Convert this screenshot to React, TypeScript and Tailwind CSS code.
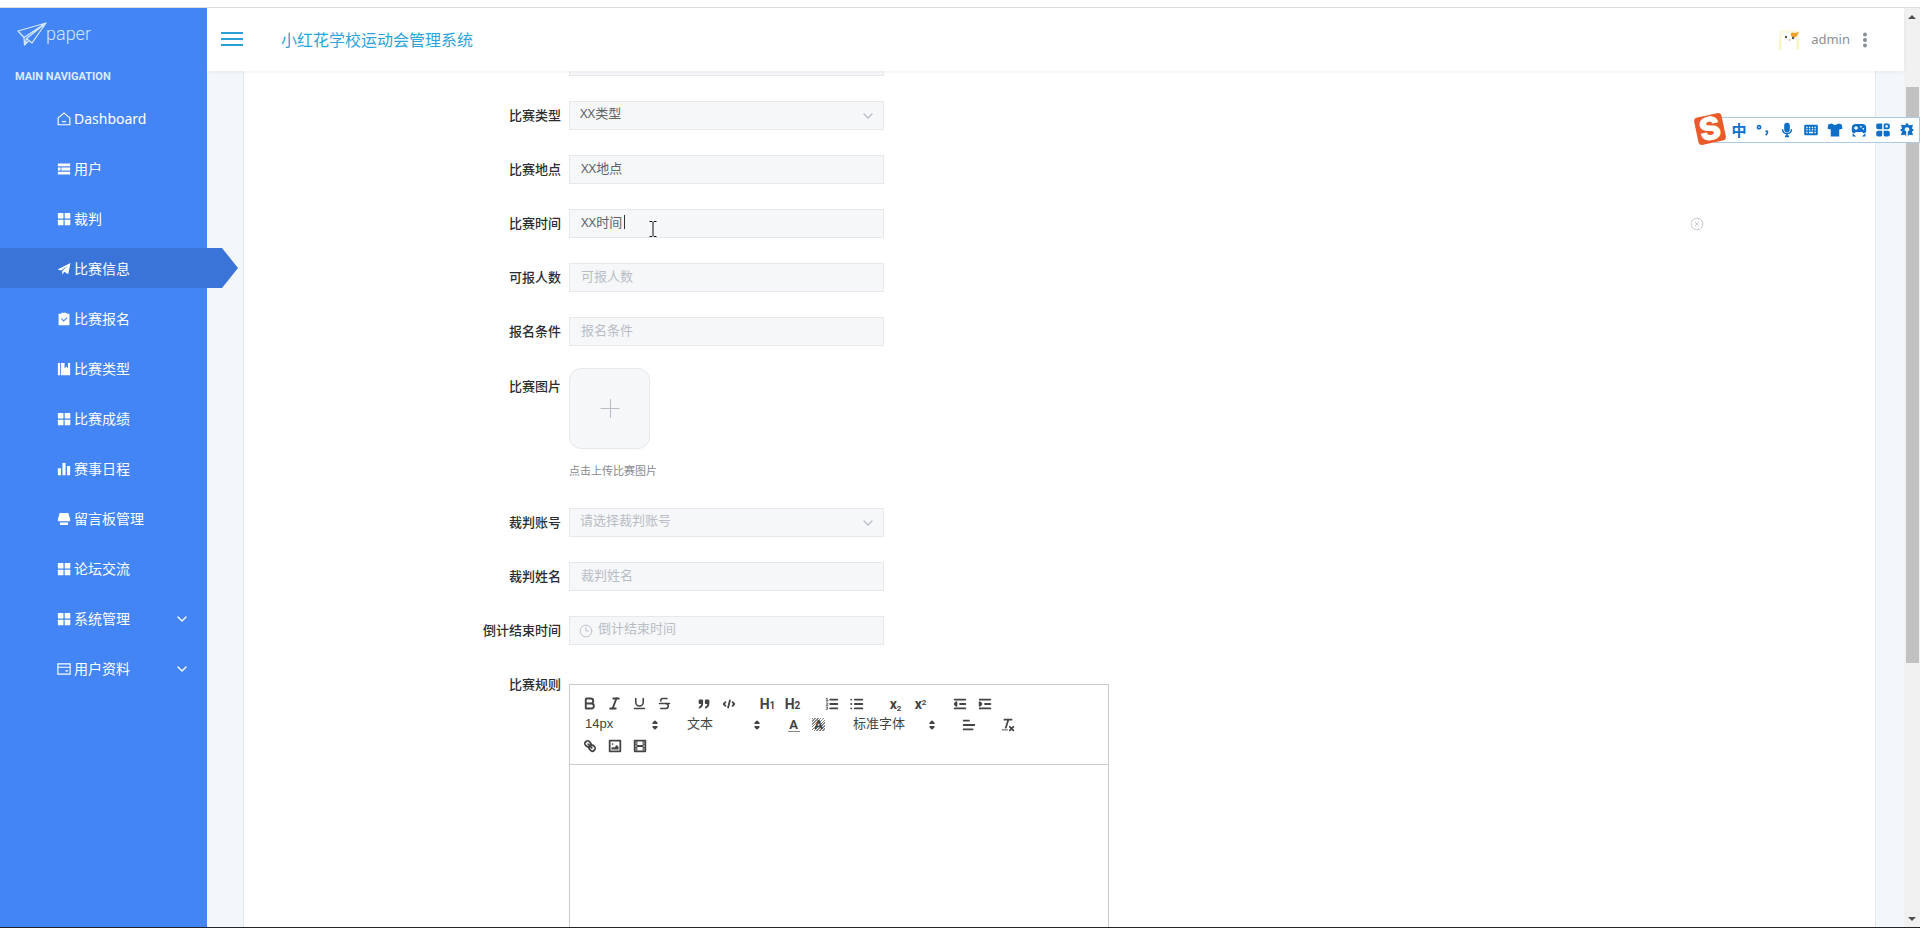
import type { ReactNode } from "react";
import {
  Bold,
  ChevronDown,
  CircleX,
  Clock3,
  Italic,
  Strikethrough,
  Underline,
} from "lucide-react";

type IconProps = { children: ReactNode };

// 16x16 solid glyphs used by the side menu
function MenuIcon({ children }: IconProps) {
  return (
    <svg viewBox="0 0 16 16" className="size-3.5 shrink-0" fill="currentColor">
      {children}
    </svg>
  );
}

// 18x18 line glyphs used by the editor toolbar
function EditorIcon({ children }: IconProps) {
  return (
    <svg
      viewBox="0 0 18 18"
      className="size-4"
      fill="none"
      stroke="currentColor"
      strokeWidth="2"
      strokeLinecap="round"
      strokeLinejoin="round">
      {children}
    </svg>
  );
}

const gridIcon = (
  <MenuIcon>
    <rect x="1" y="1" width="6.4" height="6.4" rx="0.6" />
    <rect x="8.8" y="1" width="6.4" height="6.4" rx="0.6" />
    <rect x="1" y="8.8" width="6.4" height="6.4" rx="0.6" />
    <rect x="8.8" y="8.8" width="6.4" height="6.4" rx="0.6" />
  </MenuIcon>
);

const menu = [
  {
    label: "Dashboard",
    icon: (
      <MenuIcon>
        <path
          d="M3.500 5 8 1.200 12.500 5l2.200 1.500V14.600H1.300V6.500ZM6 10.600q2 1.400 4 0"
          fill="none"
          stroke="currentColor"
          strokeWidth="1.3"
        />
      </MenuIcon>
    ),
  },
  {
    label: "用户",
    icon: (
      <MenuIcon>
        <path d="M1 1.600h14v3.200H1ZM1 6.400h3v3.200H1ZM5 6.400h10v3.200H5ZM1 11.200h14v3.200H1Z" />
      </MenuIcon>
    ),
  },
  { label: "裁判", icon: gridIcon },
  {
    label: "比赛信息",
    active: true,
    icon: (
      <MenuIcon>
        <path d="M.6 8.600 15.400 1 12.800 14 8.400 11.200 6 14.600V10.400L12.400 4.400 4.600 9.800Z" />
      </MenuIcon>
    ),
  },
  {
    label: "比赛报名",
    icon: (
      <MenuIcon>
        <path
          fillRule="evenodd"
          d="M1.800 2H5V.8h6V2h3.200v13.200H1.800ZM4.600 8l2.900 3.200 4.500-4.400-.9-.9-3.500 3.500-2-2.300Z"
        />
      </MenuIcon>
    ),
  },
  {
    label: "比赛类型",
    icon: (
      <MenuIcon>
        <path d="M1 1h2.600v14H1ZM4.600 1h4v6l2-1.600 2 1.600V1H15v14H4.600Z" />
      </MenuIcon>
    ),
  },
  { label: "比赛成绩", icon: gridIcon },
  {
    label: "赛事日程",
    icon: (
      <MenuIcon>
        <path d="M1 7h3.600v8H1ZM6.200 1h3.600v14H6.200ZM11.400 4.600H15V15h-3.600Z" />
      </MenuIcon>
    ),
  },
  {
    label: "留言板管理",
    icon: (
      <MenuIcon>
        <path d="M3 1h10l2 7.400v2.200H1V8.400ZM3.400 12h9.200v2.800H3.400Z" />
      </MenuIcon>
    ),
  },
  { label: "论坛交流", icon: gridIcon },
  { label: "系统管理", icon: gridIcon, nested: true },
  {
    label: "用户资料",
    nested: true,
    icon: (
      <MenuIcon>
        <path
          d="M1 2.200h14v11.600H1ZM1 6h14M9.500 10.200h3.200"
          fill="none"
          stroke="currentColor"
          strokeWidth="1.3"
        />
      </MenuIcon>
    ),
  },
];

function Sidebar() {
  return (
    <aside className="z-20 flex w-[207px] shrink-0 flex-col bg-[#4385f5] text-white">
      <a href="#" className="flex h-10 items-end pl-4 text-[#d3e8ff]">
        <svg
          viewBox="0 0 32 26"
          className="h-[26px] w-8"
          fill="none"
          stroke="currentColor"
          strokeWidth="1.3"
          strokeLinejoin="round">
          <path d="M2 9 30 1 16 21 10.500 16.500 8.500 23 8 15.500ZM8 15.500 30 1 10.500 16.500M8.500 23l4-4" />
        </svg>
        <span className="-ml-0.5 font-[Roboto] text-lg leading-7 font-light">
          paper
        </span>
      </a>
      <p className="mt-[21px] pl-[15px] font-[Roboto] text-[11px] leading-4 font-bold text-[#dcebff]">
        MAIN NAVIGATION
      </p>
      <nav className="mt-[13px] flex flex-col gap-2.5">
        {menu.map((item) => (
          <a
            key={item.label}
            href="#"
            aria-current={item.active ? "page" : undefined}
            className={
              item.active
                ? "flex h-10 w-[238px] items-center gap-[3px] bg-[#3b74d9] pt-0.5 pl-[57px] text-sm [clip-path:polygon(0_0,222px_0,100%_50%,222px_100%,0_100%)]"
                : "flex h-10 items-center gap-[3px] pt-0.5 pr-[17px] pl-[57px] text-sm"
            }>
            {item.icon}
            <span>{item.label}</span>
            {item.nested ? (
              <ChevronDown className="ml-auto size-4" strokeWidth={2} />
            ) : null}
          </a>
        ))}
      </nav>
    </aside>
  );
}

function Avatar() {
  return (
    <svg viewBox="0 0 20 20" className="size-5">
      <rect width="20" height="20" fill="#fbf9e4" />
      <path d="M3 20V7q7-8 14 0v13Z" fill="#fff" />
      <path d="M0 9h2v11H0ZM18 9h2v11h-2Z" fill="#f6f5c4" />
      <path d="M12 3q3-1 4 0l4-1-2 4-3 2-3-2Z" fill="#efa32c" />
      <circle cx="7" cy="7" r="1.2" fill="#555" />
      <circle cx="14" cy="8" r="1.2" fill="#555" />
      <path d="M9.500 9.500h2l-1 1.500Z" fill="#e06a5a" />
    </svg>
  );
}

function Header() {
  return (
    <header className="z-10 flex h-[63px] shrink-0 items-center bg-white pr-9 pl-3.5 shadow-[0_1px_4px_rgba(0,0,0,0.06)]">
      <button type="button" aria-label="菜单" className="text-[#2c9fd6]">
        <svg
          viewBox="0 0 22 18"
          className="h-[18px] w-[22px]"
          stroke="currentColor"
          strokeWidth="2">
          <path d="M0 2h22M0 8h22M0 14h22" />
        </svg>
      </button>
      <h1 className="ml-[38px] text-base text-[#2ba4dc]">
        小红花学校运动会管理系统
      </h1>
      <div className="ml-auto flex items-center text-[#8a8f96]">
        <Avatar />
        <span className="ml-3 text-[13px]">admin</span>
        <button type="button" aria-label="更多" className="ml-3">
          <svg viewBox="0 0 6 16" className="h-4 w-1.5" fill="currentColor">
            <circle cx="3" cy="2.5" r="2" />
            <circle cx="3" cy="8" r="2" />
            <circle cx="3" cy="13.5" r="2" />
          </svg>
        </button>
      </div>
    </header>
  );
}

type RowProps = { id: string; label?: string; children: ReactNode };

function Row({ id, label, children }: RowProps) {
  return (
    <div className="flex items-start">
      <label
        htmlFor={id}
        className="w-[325px] shrink-0 pr-2 text-right text-[13px] leading-[29px] font-medium text-[#2b2d30]">
        {label}
      </label>
      {children}
    </div>
  );
}

type InputProps = {
  id: string;
  placeholder?: string;
  value?: string;
};

function TextInput({ id, placeholder, value }: InputProps) {
  return (
    <input
      id={id}
      type="text"
      placeholder={placeholder}
      defaultValue={value}
      className="block h-[29px] w-[315px] border border-[#e6e8ec] bg-[#f5f7f9] px-[11px] pb-1 text-[13px] text-[#606266] outline-none placeholder:text-[#b9bdc5]"
    />
  );
}

type SelectProps = { id: string; option: string; empty?: boolean };

function SelectInput({ id, option, empty }: SelectProps) {
  return (
    <div className="grid w-[315px] items-center">
      <select
        id={id}
        className={
          empty
            ? "col-start-1 row-start-1 h-[29px] appearance-none border border-[#e6e8ec] bg-[#f5f7f9] px-2.5 pb-1 text-[13px] text-[#b9bdc5]"
            : "col-start-1 row-start-1 h-[29px] appearance-none border border-[#e6e8ec] bg-[#f5f7f9] px-2.5 pb-1 text-[13px] text-[#606266]"
        }>
        <option>{option}</option>
      </select>
      <ChevronDown
        className="pointer-events-none col-start-1 row-start-1 mr-2 size-4 justify-self-end text-[#b9bdc5]"
        strokeWidth={2}
      />
    </div>
  );
}

type ToolProps = { label: string; children: ReactNode };

function Tool({ label, children }: ToolProps) {
  return (
    <button
      type="button"
      aria-label={label}
      className="flex h-[21px] w-[25px] items-center justify-center font-[Roboto] text-[14px] leading-none font-bold">
      {children}
    </button>
  );
}

type PickerProps = { label: string; option: string; wide?: boolean };

function Picker({ label, option, wide }: PickerProps) {
  return (
    <div
      className={
        wide
          ? "grid h-[21px] w-[97px] items-center"
          : "grid h-[21px] w-[88px] items-center"
      }>
      <select
        aria-label={label}
        className="col-start-1 row-start-1 h-[21px] appearance-none pb-1 pl-2 font-['Liberation_Sans','Noto_Sans_CJK_SC',sans-serif] text-[13px]">
        <option>{option}</option>
      </select>
      <svg
        viewBox="0 0 18 18"
        className="pointer-events-none col-start-1 row-start-1 mr-0.5 size-4 justify-self-end"
        fill="currentColor"
        stroke="currentColor"
        strokeWidth="2"
        strokeLinejoin="round">
        <path d="m7 11 2 2 2-2ZM7 7l2-2 2 2Z" />
      </svg>
    </div>
  );
}

function EditorToolbar() {
  return (
    <div className="border-b border-[#c9ccce] py-2 pl-[7px] text-[#444]">
      <div className="flex gap-3.5">
        <div className="flex">
          <Tool label="粗体">
            <Bold className="size-[15px]" strokeWidth={3} />
          </Tool>
          <Tool label="斜体">
            <Italic className="size-[15px]" strokeWidth={3} />
          </Tool>
          <Tool label="下划线">
            <Underline className="size-[15px]" strokeWidth={2.5} />
          </Tool>
          <Tool label="删除线">
            <Strikethrough className="size-[15px]" strokeWidth={2.5} />
          </Tool>
        </div>
        <div className="flex">
          <Tool label="引用">
            <EditorIcon>
              <path d="M4 5h3v3H4ZM11 5h3v3h-3Z" fill="currentColor" />
              <path d="M7 8c0 4-3 5-3 5M14 8c0 4-3 5-3 5" />
            </EditorIcon>
          </Tool>
          <Tool label="代码">
            <EditorIcon>
              <path d="M5 7 3 9l2 2M13 7l2 2-2 2M10 5 8 13" />
            </EditorIcon>
          </Tool>
        </div>
        <div className="flex">
          <Tool label="一级标题">
            <span>
              H<span className="text-[10px]">1</span>
            </span>
          </Tool>
          <Tool label="二级标题">
            <span>
              H<span className="text-[10px]">2</span>
            </span>
          </Tool>
        </div>
        <div className="flex">
          <Tool label="有序列表">
            <EditorIcon>
              <path d="M7 4h8M7 9h8M7 14h8" />
              <path
                d="M2.500 5.500h2M3.500 5.500v-3l-1 .5M4.500 10.500h-2c0-.8 1.900-1 1.900-2s-1.500-1-1.900-.5M2.500 12.500h1.800l-1 1.200c1.500 0 1.300 2-.8 1.600"
                strokeWidth="1"
              />
            </EditorIcon>
          </Tool>
          <Tool label="无序列表">
            <EditorIcon>
              <path d="M6.500 4H15M6.500 9H15M6.500 14H15M2.500 4h.1M2.500 9h.1M2.500 14h.1" />
            </EditorIcon>
          </Tool>
        </div>
        <div className="flex">
          <Tool label="下标">
            <span>
              x<sub className="text-[8px]">2</sub>
            </span>
          </Tool>
          <Tool label="上标">
            <span>
              x<sup className="text-[8px]">2</sup>
            </span>
          </Tool>
        </div>
        <div className="flex">
          <Tool label="减少缩进">
            <EditorIcon>
              <path d="M3 14h12M3 4h12M9 9h6" />
              <path d="M5 7v4L3 9Z" fill="currentColor" />
            </EditorIcon>
          </Tool>
          <Tool label="增加缩进">
            <EditorIcon>
              <path d="M3 14h12M3 4h12M9 9h6" />
              <path d="M3 7v4l2-2Z" fill="currentColor" />
            </EditorIcon>
          </Tool>
        </div>
      </div>
      <div className="flex gap-3.5">
        <Picker label="字号" option="14px" />
        <Picker label="标题" option="文本" />
        <div className="flex">
          <Tool label="文字颜色">
            <span className="w-3 border-b border-[#888] text-[13px]">A</span>
          </Tool>
          <Tool label="背景颜色">
            <span className="w-[13px] bg-[repeating-linear-gradient(135deg,#888_0,#888_1px,#fff_1px,#fff_2px)] text-[13px]">
              A
            </span>
          </Tool>
        </div>
        <Picker label="字体" option="标准字体" wide />
        <Tool label="对齐">
          <EditorIcon>
            <path d="M3 9h12M3 14h10M3 4h6" />
          </EditorIcon>
        </Tool>
        <Tool label="清除格式">
          <EditorIcon>
            <path d="M5 3h8M6.500 12 9.400 3M11 11l4 4M15 11l-4 4" />
            <path d="M2.500 14.500h6" strokeWidth="1" />
          </EditorIcon>
        </Tool>
      </div>
      <div className="flex">
        <Tool label="链接">
          <EditorIcon>
            <path d="m7 7 4 4M8.900 4.577a3.476 3.476 0 0 1 .36 4.679A3.476 3.476 0 0 1 4.577 8.900C3.185 7.500 2.035 6.400 4.217 4.217S7.500 3.185 8.900 4.577ZM13.423 9.100a3.476 3.476 0 0 0-4.679-.36 3.476 3.476 0 0 0 .36 4.679c1.392 1.392 2.500 2.542 4.679.36S14.815 10.500 13.423 9.100Z" />
          </EditorIcon>
        </Tool>
        <Tool label="图片">
          <EditorIcon>
            <path d="M3 3h12v12H3Z" />
            <path
              d="M5 13v-2l2-1 1 1 3-3 2 2v3ZM5.500 6h1.500v1.500H5.500Z"
              fill="currentColor"
              stroke="none"
            />
          </EditorIcon>
        </Tool>
        <Tool label="视频">
          <EditorIcon>
            <path d="M3 3h12v12H3Z" />
            <path
              d="M5 3h1v12H5ZM12 3h1v12h-1ZM5 8h8v2H5ZM3 5h3v1H3ZM3 7h3v1H3ZM3 10h3v1H3ZM3 12h3v1H3ZM12 5h3v1h-3ZM12 7h3v1h-3ZM12 10h3v1h-3ZM12 12h3v1h-3Z"
              fill="currentColor"
              stroke="none"
            />
          </EditorIcon>
        </Tool>
      </div>
    </div>
  );
}

function MatchForm() {
  return (
    <form className="-mt-6 pr-[171px]">
      <div className="flex flex-col gap-[25px]">
        <Row id="name">
          <TextInput id="name" />
        </Row>
        <Row id="type" label="比赛类型">
          <SelectInput id="type" option="XX类型" />
        </Row>
        <Row id="place" label="比赛地点">
          <TextInput id="place" value="XX地点" />
        </Row>
        <Row id="time" label="比赛时间">
          <div className="flex flex-1 items-center justify-between">
            <div className="relative">
              <TextInput id="time" value="XX时间" />
              {/* caret and pointer over the focused field */}
              <span className="absolute top-1.5 left-[55px] h-3.5 w-px bg-[#333]" />
              <svg
                viewBox="0 0 8 16"
                className="absolute top-3 left-20 h-4 w-2"
                fill="none"
                stroke="#111">
                <path d="M.5.500h2.500l1 1 1-1h2.500M4 1.500v13M.5 15.500h2.500l1-1 1 1h2.500" />
              </svg>
            </div>
            <button type="button" aria-label="清除" className="text-[#c0c4cc]">
              <CircleX className="size-3.5" strokeWidth={1.5} />
            </button>
          </div>
        </Row>
        <Row id="limit" label="可报人数">
          <TextInput id="limit" placeholder="可报人数" />
        </Row>
        <Row id="condition" label="报名条件">
          <TextInput id="condition" placeholder="报名条件" />
        </Row>
      </div>

      <div className="my-[22px] flex items-start">
        <span className="w-[325px] shrink-0 pr-2 text-right text-[13px] leading-9 font-medium text-[#2b2d30]">
          比赛图片
        </span>
        <div>
          <button
            type="button"
            aria-label="上传比赛图片"
            className="flex size-[81px] items-center justify-center rounded-xl border border-[#e6e8ec] bg-[#f5f7f9] text-[#b9bdc5]">
            <svg viewBox="0 0 20 20" className="size-5" stroke="currentColor">
              <path d="M.5 9.500h19M10.500 0v19" />
            </svg>
          </button>
          <p className="mt-3 pb-[5px] text-[11px] leading-5 text-[#85888e]">
            点击上传比赛图片
          </p>
        </div>
      </div>

      <div className="flex flex-col gap-[25px]">
        <Row id="judge-account" label="裁判账号">
          <SelectInput id="judge-account" option="请选择裁判账号" empty />
        </Row>
        <Row id="judge-name" label="裁判姓名">
          <TextInput id="judge-name" placeholder="裁判姓名" />
        </Row>
        <Row id="deadline" label="倒计结束时间">
          <div className="flex h-[29px] w-[315px] items-center gap-[5px] border border-[#e6e8ec] bg-[#f5f7f9] px-[9px] text-[#b9bdc5]">
            <Clock3 className="size-3.5" strokeWidth={1.5} />
            <input
              id="deadline"
              type="text"
              placeholder="倒计结束时间"
              className="min-w-0 flex-1 pb-[3px] text-[13px] outline-none placeholder:text-[#b9bdc5]"
            />
          </div>
        </Row>
        <Row id="rules" label="比赛规则">
          <div className="mt-3.5 w-[540px] border border-[#c9ccce]">
            <EditorToolbar />
            <textarea
              id="rules"
              className="block h-80 w-full resize-none p-3 text-[13px] outline-none"
            />
          </div>
        </Row>
      </div>
    </form>
  );
}

function Scrollbar() {
  return (
    <div className="flex w-4 shrink-0 flex-col items-center bg-[#f1f1f1] text-[#505050]">
      <svg viewBox="0 0 16 17" className="h-[17px] w-4" fill="currentColor">
        <path d="m4 11 4-4 4 4Z" />
      </svg>
      <div className="flex-[62]" />
      <div className="w-[13px] flex-[576] bg-[#c1c1c1]" />
      <div className="flex-[247]" />
      <svg viewBox="0 0 16 17" className="h-[17px] w-4" fill="currentColor">
        <path d="m4 7 4 4 4-4Z" />
      </svg>
    </div>
  );
}

const imeTools = [
  <path
    key="punct"
    d="M5 4.500a2 2 0 1 0 .1 0ZM13 11.500h2.500v2l-2 3"
    fill="none"
    stroke="currentColor"
    strokeWidth="2"
  />,
  <path
    key="mic"
    d="M10 1a3.500 3.500 0 0 1 3.500 3.500v5a3.500 3.500 0 0 1-7 0v-5A3.500 3.500 0 0 1 10 1ZM3.500 9h1.900a4.600 4.600 0 0 0 9.200 0h1.900a6.500 6.500 0 0 1-5.500 6.300V17h1.500v2h-5v-2H9v-1.700A6.500 6.500 0 0 1 3.500 9Z"
  />,
  <path
    key="keyboard"
    fillRule="evenodd"
    d="M3 3.500h14A1.500 1.500 0 0 1 18.500 5v10a1.500 1.500 0 0 1-1.500 1.500H3A1.500 1.500 0 0 1 1.500 15V5A1.500 1.500 0 0 1 3 3.500ZM4 6v1.700h1.700V6ZM7.400 6v1.700h1.700V6ZM10.900 6v1.700h1.700V6ZM14.300 6v1.700H16V6ZM4 9v1.700h1.700V9ZM7.400 9v1.700h1.700V9ZM10.900 9v1.700h1.700V9ZM14.300 9v1.700H16V9ZM4 12.300V14h1.700v-1.700ZM7.400 12.300V14h5.200v-1.700ZM14.300 12.300V14H16v-1.700Z"
  />,
  <path
    key="skin"
    d="M6 2q4 3.500 8 0l4.500 1 .8 5.500-4 1V18H4.700V9.500l-4-1L1.500 3Z"
  />,
  <path
    key="game"
    fillRule="evenodd"
    d="M6 2.500h8q5 0 5 5v3q0 3.500-3.500 3.500L14 12.500H6L4.500 14Q1 14 1 10.500v-3q0-5 5-5ZM5.500 5v1.700H3.800v1.600h1.700V10h1.600V8.300h1.700V6.700H7.100V5ZM11.500 5v1.800h1.800V5ZM14.500 7.500v1.800h1.800V7.500ZM2 14l4.500 4H2ZM18 14l-4.500 4H18Z"
  />,
  <path
    key="apps"
    fillRule="evenodd"
    d="M3.500 2H9v7.200H4A2.500 2.500 0 0 1 1.500 6.700V4a2 2 0 0 1 2-2ZM12.500 2h3.500a2.500 2.500 0 0 1 2.500 2.500v2.200A2.500 2.500 0 0 1 16 9.200h-5.200V3.700A1.700 1.700 0 0 1 12.500 2ZM13 4.200V7h3V4.200ZM4 10.800h5v5.500A1.700 1.700 0 0 1 7.300 18H4a2.500 2.500 0 0 1-2.500-2.500v-2.200A2.500 2.500 0 0 1 4 10.800ZM10.800 10.800H16a2.500 2.500 0 0 1 2.500 2.500v2.200A2.500 2.500 0 0 1 16 18h-3.500a1.700 1.700 0 0 1-1.700-1.700Z"
  />,
  <path
    key="settings"
    fillRule="evenodd"
    d="m10 1 2.500 3 5-.5-1.300 4.500L19 10l-2.800 2 1.300 4.500-5-.5L11 18.500V12q2-.5 2-2.500A3 3 0 0 0 10 6.500a3 3 0 0 0-3 3Q7 11.500 9 12v6.500L7.500 16l-5 .5L3.800 12 1 10l2.800-2L2.500 3.500l5 .5Z"
  />,
];

// Floating input-method bar, docked at the right edge of the window
function ImeBar() {
  return (
    <div className="absolute top-[115px] right-0 z-30 flex items-center">
      <div className="z-10 -mr-2.5 flex size-7 -rotate-12 items-center justify-center rounded-sm bg-[#ea5a2b] font-[Inter] text-[32px] leading-none font-black text-white">
        S
      </div>
      <div className="mt-0.5 flex h-[26px] items-center border border-[#a9c9e4] bg-white pl-3 text-[#0d6fc8]">
        <span className="w-6 text-center text-[15px] font-bold">中</span>
        {imeTools.map((tool) => (
          <svg
            key={tool.key}
            viewBox="0 0 20 20"
            className="mx-1 size-4"
            fill="currentColor">
            {tool}
          </svg>
        ))}
      </div>
    </div>
  );
}

export default function App() {
  return (
    <div className="relative flex h-screen flex-col overflow-hidden border-b border-[#22252a] bg-white font-['Noto_Sans','Noto_Sans_CJK_SC',sans-serif]">
      <div className="h-2 shrink-0 border-b border-[#dedede]" />
      <div className="flex min-h-0 flex-1">
        <Sidebar />
        <div className="flex min-w-0 flex-1 flex-col">
          <Header />
          <main className="min-h-0 flex-1 overflow-hidden bg-[#f3f7fa] pr-7 pl-9">
            <div className="flow-root border-x border-[#e4e7ea] bg-white">
              <MatchForm />
            </div>
          </main>
        </div>
        <Scrollbar />
      </div>
      <ImeBar />
    </div>
  );
}
